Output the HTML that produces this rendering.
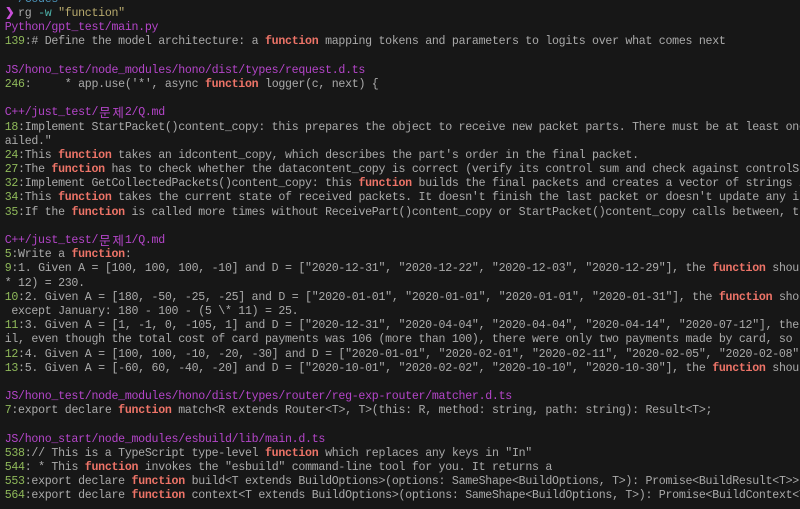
<!DOCTYPE html>
<html>
<head>
<meta charset="utf-8">
<style>
html,body{margin:0;padding:0;background:#171717;}
body{width:800px;height:503px;overflow:hidden;position:relative;}
#t{position:absolute;left:4.7px;top:-7.2px;width:796px;height:516px;overflow:hidden;font-family:"Liberation Mono","Noto Sans CJK KR",monospace;font-size:11.6px;letter-spacing:-.283px;line-height:14.2px;color:#aaaaaa;filter:blur(.3px);}
.r{display:block;height:14.2px;white-space:pre;}
.p{color:#b445c9;}
.n{color:#8fb95a;}
.f{color:#ee7468;font-weight:bold;}
.k{display:inline-block;width:13.36px;text-align:center;font-family:"Noto Sans CJK KR",sans-serif;font-size:12.5px;letter-spacing:0;line-height:14.2px;vertical-align:top;position:relative;top:-1px;}
.a{display:inline-block;width:6.68px;position:relative;left:.3px;color:#c84fd8;font-weight:bold;letter-spacing:0;}
</style>
</head>
<body>
<div id="t">
<span class="r" style="color:#4c93b8;"> ~/Codes</span>
<span class="r"><span class="a">❯</span> rg <span style="color:#4db3aa;">-w</span> <span style="color:#b8aa6e;">"function"</span></span>
<span class="r p">Python/gpt_test/main.py</span>
<span class="r"><span class="n">139</span>:# Define the model architecture: a <span class="f">function</span> mapping tokens and parameters to logits over what comes next</span>
<span class="r"> </span>
<span class="r p">JS/hono_test/node_modules/hono/dist/types/request.d.ts</span>
<span class="r"><span class="n">246</span>:     * app.use('*', async <span class="f">function</span> logger(c, next) {</span>
<span class="r"> </span>
<span class="r p">C++/just_test/<span class="k">문</span><span class="k">제</span>2/Q.md</span>
<span class="r"><span class="n">18</span>:Implement StartPacket()content_copy: this prepares the object to receive new packet parts. There must be at least one</span>
<span class="r">ailed."</span>
<span class="r"><span class="n">24</span>:This <span class="f">function</span> takes an idcontent_copy, which describes the part's order in the final packet.</span>
<span class="r"><span class="n">27</span>:The <span class="f">function</span> has to check whether the datacontent_copy is correct (verify its control sum and check against controlSum</span>
<span class="r"><span class="n">32</span>:Implement GetCollectedPackets()content_copy: this <span class="f">function</span> builds the final packets and creates a vector of strings i</span>
<span class="r"><span class="n">34</span>:This <span class="f">function</span> takes the current state of received packets. It doesn't finish the last packet or doesn't update any in</span>
<span class="r"><span class="n">35</span>:If the <span class="f">function</span> is called more times without ReceivePart()content_copy or StartPacket()content_copy calls between, th</span>
<span class="r"> </span>
<span class="r p">C++/just_test/<span class="k">문</span><span class="k">제</span>1/Q.md</span>
<span class="r"><span class="n">5</span>:Write a <span class="f">function</span>:</span>
<span class="r"><span class="n">9</span>:1. Given A = [100, 100, 100, -10] and D = ["2020-12-31", "2020-12-22", "2020-12-03", "2020-12-29"], the <span class="f">function</span> shou</span>
<span class="r">* 12) = 230.</span>
<span class="r"><span class="n">10</span>:2. Given A = [180, -50, -25, -25] and D = ["2020-01-01", "2020-01-01", "2020-01-01", "2020-01-31"], the <span class="f">function</span> sho</span>
<span class="r"> except January: 180 - 100 - (5 \* 11) = 25.</span>
<span class="r"><span class="n">11</span>:3. Given A = [1, -1, 0, -105, 1] and D = ["2020-12-31", "2020-04-04", "2020-04-04", "2020-04-14", "2020-07-12"], the</span>
<span class="r">il, even though the total cost of card payments was 106 (more than 100), there were only two payments made by card, so t</span>
<span class="r"><span class="n">12</span>:4. Given A = [100, 100, -10, -20, -30] and D = ["2020-01-01", "2020-02-01", "2020-02-11", "2020-02-05", "2020-02-08"]</span>
<span class="r"><span class="n">13</span>:5. Given A = [-60, 60, -40, -20] and D = ["2020-10-01", "2020-02-02", "2020-10-10", "2020-10-30"], the <span class="f">function</span> shou</span>
<span class="r"> </span>
<span class="r p">JS/hono_test/node_modules/hono/dist/types/router/reg-exp-router/matcher.d.ts</span>
<span class="r"><span class="n">7</span>:export declare <span class="f">function</span> match&lt;R extends Router&lt;T&gt;, T&gt;(this: R, method: string, path: string): Result&lt;T&gt;;</span>
<span class="r"> </span>
<span class="r p">JS/hono_start/node_modules/esbuild/lib/main.d.ts</span>
<span class="r"><span class="n">538</span>:// This is a TypeScript type-level <span class="f">function</span> which replaces any keys in "In"</span>
<span class="r"><span class="n">544</span>: * This <span class="f">function</span> invokes the "esbuild" command-line tool for you. It returns a</span>
<span class="r"><span class="n">553</span>:export declare <span class="f">function</span> build&lt;T extends BuildOptions&gt;(options: SameShape&lt;BuildOptions, T&gt;): Promise&lt;BuildResult&lt;T&gt;&gt;;</span>
<span class="r"><span class="n">564</span>:export declare <span class="f">function</span> context&lt;T extends BuildOptions&gt;(options: SameShape&lt;BuildOptions, T&gt;): Promise&lt;BuildContext&lt;T</span>
</div>
</body>
</html>
